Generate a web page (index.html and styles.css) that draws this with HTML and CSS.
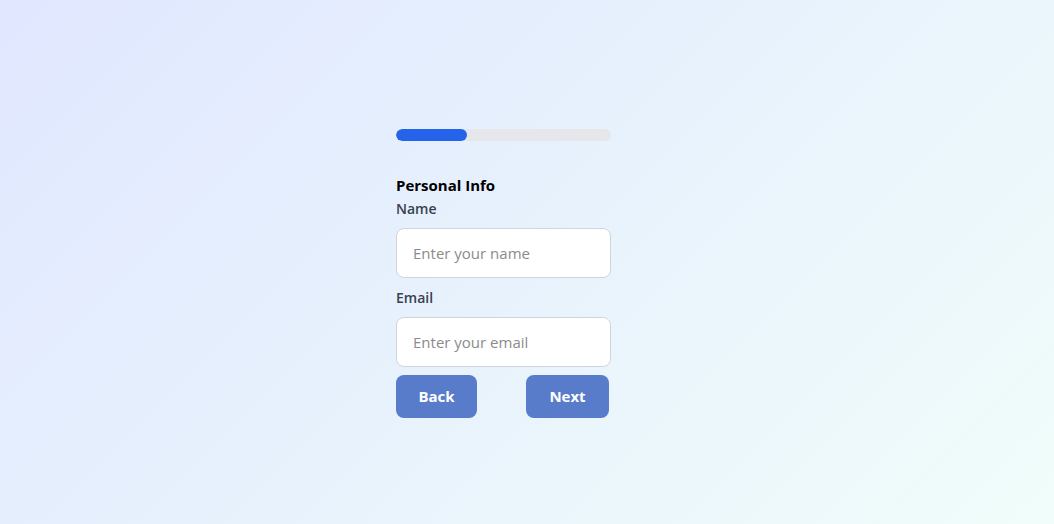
FILE: index.html
```html
<!DOCTYPE html>
<html lang="en">
<head>
<meta charset="utf-8">
<title>Personal Info</title>
<link rel="stylesheet" href="styles.css">
</head>
<body>
<main class="wizard">
  <div class="wizard-inner">
    <div class="progress"><div class="progress-fill" style="width:33%"></div></div>
    <h2 class="step-title">Personal Info</h2>
    <label class="field-label" for="name">Name</label>
    <input class="field-input" id="name" type="text" placeholder="Enter your name">
    <label class="field-label" for="email">Email</label>
    <input class="field-input field-input-last" id="email" type="email" placeholder="Enter your email">
    <div class="actions">
      <button class="btn btn-back">Back</button>
      <button class="btn btn-next">Next</button>
    </div>
  </div>
</main>
</body>
</html>
```
FILE: styles.css
```css
* { box-sizing: border-box; }
html, body { height: 100%; }
body {
  margin: 0;
  font-family: "Open Sans", "Noto Sans", sans-serif;
  background: linear-gradient(135deg, #e0e7ff 0%, #f0fdfa 100%);
  display: flex;
  justify-content: center;
  padding-top: 129px;
}
.wizard {
  width: 262px;
}
.wizard-inner {
  width: 215px;
  display: flex;
  flex-direction: column;
}
.progress {
  height: 12px;
  border-radius: 999px;
  background: #e5e7eb;
  overflow: hidden;
  margin-bottom: 32px;
}
.progress-fill {
  height: 100%;
  background: #2563eb;
  border-radius: 999px;
}
.step-title {
  margin: 0 0 1px;
  font-size: 15px;
  line-height: 24px;
  font-weight: 700;
  color: #000;
}
.field-label {
  font-size: 14px;
  line-height: 22px;
  font-weight: 600;
  color: #374151;
  margin-bottom: 8px;
}
.field-input {
  height: 50px;
  width: 100%;
  border: 1px solid #d1d5db;
  border-radius: 8px;
  background: #fff;
  padding: 0 16px;
  font-family: inherit;
  font-size: 15px;
  color: #111827;
  margin-bottom: 9px;
  outline: none;
}
.field-input-last { margin-bottom: 8px; }
.field-input::placeholder { color: #8b8b8b; }
.actions {
  display: flex;
  justify-content: space-between;
  padding-right: 2px;
}
.btn {
  height: 43px;
  border: none;
  border-radius: 8px;
  background: #587cc9;
  color: #fff;
  font-family: inherit;
  font-size: 15px;
  font-weight: 700;
  padding: 0 0 2px;
}
.btn-back { width: 81px; }
.btn-next { width: 83px; }
```
